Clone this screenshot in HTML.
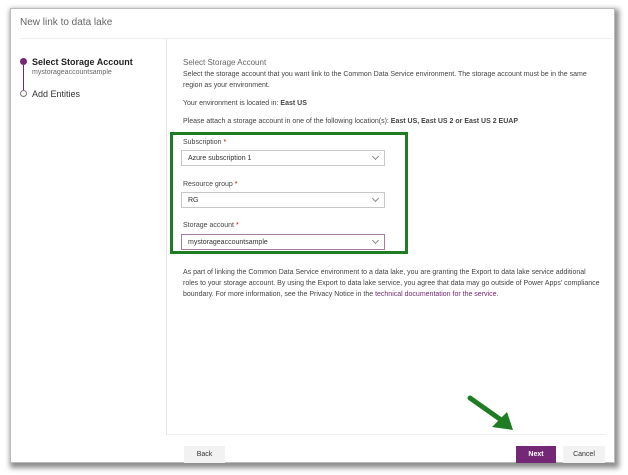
<!DOCTYPE html>
<html><head><style>
*{margin:0;padding:0;box-sizing:border-box}
body{width:628px;height:475px;background:#fff;position:relative;overflow:hidden;font-family:"Liberation Sans",sans-serif;color:#333}
.a{position:absolute;white-space:nowrap}
.dlg{position:absolute;left:10px;top:8px;width:605px;height:455px;background:#fff;box-shadow:2px 3px 5px 2px rgba(0,0,0,.45);border:1px solid #bbb}
.s{font-size:7px;color:#444}
.dd{position:absolute;left:181px;width:204px;height:16px;border:1px solid #c8c8c8;font-size:7px;padding:4px 6px;color:#333}
.dd:after{content:"";position:absolute;right:6px;top:3px;width:4px;height:4px;border-right:1px solid #888;border-bottom:1px solid #888;transform:rotate(45deg)}
.lbl{font-size:7px;color:#444}
.lbl b{color:#c00;font-weight:normal}
.btn{position:absolute;top:446px;height:17px;font-size:7px;text-align:center;line-height:17px;background:#f2f2f2;color:#333}
</style></head><body>
<div class="dlg"></div>
<div class="a" style="left:20px;top:17px;font-size:10px;color:#666">New link to data lake</div>
<div class="a" style="left:20px;top:38px;width:592px;height:1px;background:#eee"></div>
<div class="a" style="left:166px;top:39px;width:1px;height:396px;background:#e6e6e6"></div>
<div class="a" style="left:20px;top:58px;width:7px;height:7px;border-radius:50%;background:#742774"></div>
<div class="a" style="left:23px;top:65px;width:1px;height:25px;background:#742774"></div>
<div class="a" style="left:20px;top:90px;width:7px;height:7px;border-radius:50%;border:1px solid #777;background:#fff"></div>
<div class="a" style="left:32px;top:57px;font-size:9px;font-weight:bold;color:#222">Select Storage Account</div>
<div class="a" style="left:32px;top:69px;font-size:7px;color:#666">mystorageaccountsample</div>
<div class="a" style="left:32px;top:89px;font-size:9px;color:#333">Add Entities</div>
<div class="a" style="left:183px;top:58px;font-size:8px;color:#666">Select Storage Account</div>
<div class="a s" style="left:183px;top:71px">Select the storage account that you want link to the Common Data Service environment. The storage account must be in the same</div>
<div class="a s" style="left:183px;top:82px">region as your environment.</div>
<div class="a s" style="left:183px;top:100px">Your environment is located in: <b>East US</b></div>
<div class="a s" style="left:183px;top:118px">Please attach a storage account in one of the following location(s): <b>East US, East US 2 or East US 2 EUAP</b></div>
<div class="a" style="left:170px;top:132px;width:238px;height:122px;border:3px solid #1e7d22"></div>
<div class="a lbl" style="left:183px;top:139px">Subscription <b>*</b></div>
<div class="dd" style="top:150px">Azure subscription 1</div>
<div class="a lbl" style="left:183px;top:181px">Resource group <b>*</b></div>
<div class="dd" style="top:192px">RG</div>
<div class="a lbl" style="left:183px;top:222px">Storage account <b>*</b></div>
<div class="dd" style="top:234px;border-color:#a57ba5">mystorageaccountsample</div>
<div class="a s" style="left:183px;top:269px">As part of linking the Common Data Service environment to a data lake, you are granting the Export to data lake service additional</div>
<div class="a s" style="left:183px;top:280px">roles to your storage account. By using the Export to data lake service, you agree that data may go outside of Power Apps' compliance</div>
<div class="a s" style="left:183px;top:291px">boundary. For more information, see the Privacy Notice in the <span style="color:#742774">technical documentation for the service</span>.</div>
<div class="a" style="left:166px;top:434px;width:440px;height:1px;background:#eee"></div>
<svg class="a" style="left:460px;top:390px" width="60" height="50"><line x1="10" y1="8" x2="44" y2="32" stroke="#1e7d22" stroke-width="5" stroke-linecap="round"/><polygon points="53,40 32,37 47,22" fill="#1e7d22"/></svg>
<div class="btn" style="left:184px;width:41px">Back</div>
<div class="btn" style="left:516px;width:40px;background:#742774;color:#fff;font-weight:bold">Next</div>
<div class="btn" style="left:563px;width:42px">Cancel</div>
</body></html>
